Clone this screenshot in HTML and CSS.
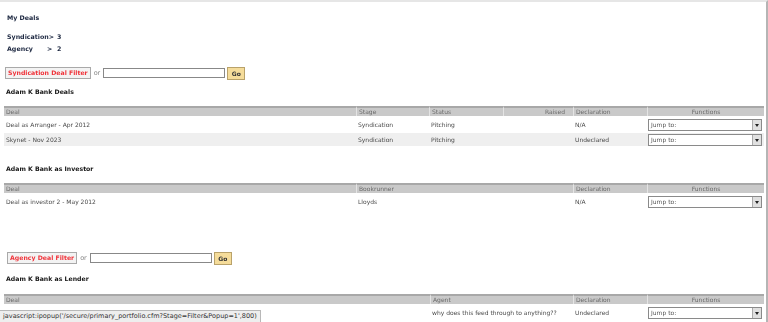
FILE: index.html
```html
<!DOCTYPE html>
<html>
<head>
<meta charset="utf-8">
<link rel="stylesheet" href="styles.css">
</head>
<body>
<div class="page">
  <h1 class="title">My Deals</h1>
  <div class="counts">
    <div class="count"><span class="count-label">Syndication&gt;</span><span class="count-num">3</span></div>
    <div class="count"><span class="count-label">Agency<span class="gt">&gt;</span></span><span class="count-num">2</span></div>
  </div>

  <div class="filter filter-synd">
    <button class="filter-btn">Syndication Deal Filter</button>
    <span class="or">or</span>
    <input class="filter-input" type="text">
    <button class="go">Go</button>
  </div>

  <h2 class="section">Adam K Bank Deals</h2>
  <table class="grid">
    <colgroup><col class="c-deal"><col class="c-stage"><col class="c-status"><col class="c-raised"><col class="c-decl"><col class="c-fn"></colgroup>
    <thead><tr><th>Deal</th><th>Stage</th><th>Status</th><th class="right">Raised</th><th>Declaration</th><th class="center">Functions</th></tr></thead>
    <tbody>
      <tr><td>Deal as Arranger - Apr 2012</td><td>Syndication</td><td>Pitching</td><td></td><td>N/A</td><td class="fn"><div class="sel"><span>Jump to:</span><i class="arr"></i></div></td></tr>
      <tr class="alt"><td>Skynet - Nov 2023</td><td>Syndication</td><td>Pitching</td><td></td><td>Undeclared</td><td class="fn"><div class="sel"><span>Jump to:</span><i class="arr"></i></div></td></tr>
    </tbody>
  </table>

  <h2 class="section investor">Adam K Bank as Investor</h2>
  <table class="grid">
    <colgroup><col class="c-deal"><col class="c-book"><col class="c-decl"><col class="c-fn"></colgroup>
    <thead><tr><th>Deal</th><th>Bookrunner</th><th>Declaration</th><th class="center">Functions</th></tr></thead>
    <tbody>
      <tr><td>Deal as investor 2 - May 2012</td><td>Lloyds</td><td>N/A</td><td class="fn"><div class="sel"><span>Jump to:</span><i class="arr"></i></div></td></tr>
    </tbody>
  </table>

  <div class="filter filter-agency">
    <button class="filter-btn">Agency Deal Filter</button>
    <span class="or">or</span>
    <input class="filter-input" type="text">
    <button class="go">Go</button>
  </div>

  <h2 class="section lender">Adam K Bank as Lender</h2>
  <table class="grid">
    <colgroup><col class="c-deal2"><col class="c-agent"><col class="c-decl"><col class="c-fn"></colgroup>
    <thead><tr><th>Deal</th><th>Agent</th><th>Declaration</th><th class="center">Functions</th></tr></thead>
    <tbody>
      <tr><td>Agency Deal</td><td>why does this feed through to anything??</td><td>Undeclared</td><td class="fn"><div class="sel"><span>Jump to:</span><i class="arr"></i></div></td></tr>
    </tbody>
  </table>
</div>
<div class="status">javascript:ipopup('/secure/primary_portfolio.cfm?Stage=Filter&amp;Popup=1',800)</div>
</body>
</html>
```
FILE: styles.css
```css
html, body { margin: 0; padding: 0; background: #fff; }
body {
  font-family: "DejaVu Sans", Verdana, sans-serif;
  font-size: 6px;
  color: #4a4a4a;
  width: 768px;
  height: 322px;
  overflow: hidden;
  position: relative;
}
.page {
  box-sizing: border-box;
  height: 322px;
  border-top: 2px solid #e6e6e6;
  border-right: 2px solid #b5b5b5;
  padding: 11px 2px 0 4px;
  will-change: transform;
}
.title {
  margin: 0 0 0 3px;
  font-size: 6.3px;
  font-weight: bold;
  color: #1c2740;
  line-height: 9px;
}
.counts { margin: 10px 0 0 3px; }
.count { display: flex; height: 12px; line-height: 9px; font-weight: bold; font-size: 6.3px; color: #1c2740; }
.count-label { width: 50px; }
.gt { margin-left: 14px; }
.filter { display: flex; align-items: center; height: 14px; }
.filter-synd { margin: 10px 0 0 1px; }
.filter-agency { margin: 41px 0 0 3px; }
.filter-btn {
  font-family: inherit;
  font-size: 6.2px;
  font-weight: bold;
  color: #f0333a;
  background: #f3f3f3;
  border: 1px solid #a9a9a9;
  height: 12px;
  padding: 0 2px;
  line-height: 10px;
  margin: 0;
}
.or { color: #888; font-size: 6.5px; margin: 0 3px 0 3px; }
.filter-input {
  width: 122px;
  height: 10px;
  box-sizing: border-box;
  border: 1px solid #888;
  padding: 0;
  margin: 0;
  background: #fff;
}
.go {
  font-family: inherit;
  font-size: 6px;
  font-weight: bold;
  color: #333;
  background: #f5dc9a;
  border: 1px solid #b9a26a;
  height: 13px;
  width: 18px;
  padding: 0;
  margin: 0 0 0 2px;
  line-height: 11px;
}
.section {
  margin: 7px 0 0 2px;
  font-size: 6.2px;
  font-weight: bold;
  color: #151515;
  line-height: 9px;
  height: 9px;
}
.section.investor { margin-top: 16px; }
.section.lender { margin-top: 9px; }
.grid {
  margin-top: 8px;
  width: 760px;
  border-collapse: separate;
  border-spacing: 0 2px;
  table-layout: fixed;
}
.lender + .grid { margin-top: 9px; }
.c-deal { width: 352px; }
.c-stage { width: 73px; }
.c-status { width: 74px; }
.c-raised { width: 70px; }
.c-decl { width: 74px; }
.c-fn { width: 117px; }
.c-book { width: 217px; }
.c-deal2 { width: 426px; }
.c-agent { width: 143px; }
.grid th {
  background: #c9c9c9;
  border-top: 2px solid #a8a8a8;
  border-left: 1px solid #e4e4e4;
  color: #6a6a6a;
  font-weight: normal;
  text-align: left;
  height: 8px;
  line-height: 8px;
  padding: 0 2px;
}
.grid th:first-child { border-left: none; }
.grid th.right { text-align: right; padding-right: 8px; }
.grid th.center { text-align: center; }
.grid td {
  height: 13px;
  padding: 0 2px;
  line-height: 13px;
  vertical-align: middle;
  color: #4a4a4a;
}
.grid tr.alt td { background: #efefef; }
.grid td.fn { padding: 0 2px 0 1px; }
.sel {
  display: flex;
  align-items: center;
  justify-content: space-between;
  height: 10px;
  border: 1px solid #8a8a8a;
  background: #fff;
  line-height: 10px;
  color: #555;
}
.sel span { padding-left: 2px; }
.arr {
  width: 8px;
  height: 10px;
  background: #e0e0e0;
  border-left: 1px solid #aaa;
  position: relative;
}
.arr::after {
  content: "";
  position: absolute;
  left: 2px;
  top: 4px;
  border-left: 2px solid transparent;
  border-right: 2px solid transparent;
  border-top: 3px solid #222;
}
.status {
  position: absolute;
  left: 0;
  bottom: 0;
  height: 11px;
  line-height: 11px;
  padding: 0 3px;
  background: #eeeeee;
  border: 1px solid #b8b8b8;
  border-left: none;
  border-bottom: none;
  color: #333;
  font-size: 6.5px;
  font-family: "DejaVu Sans", sans-serif;
}
```
